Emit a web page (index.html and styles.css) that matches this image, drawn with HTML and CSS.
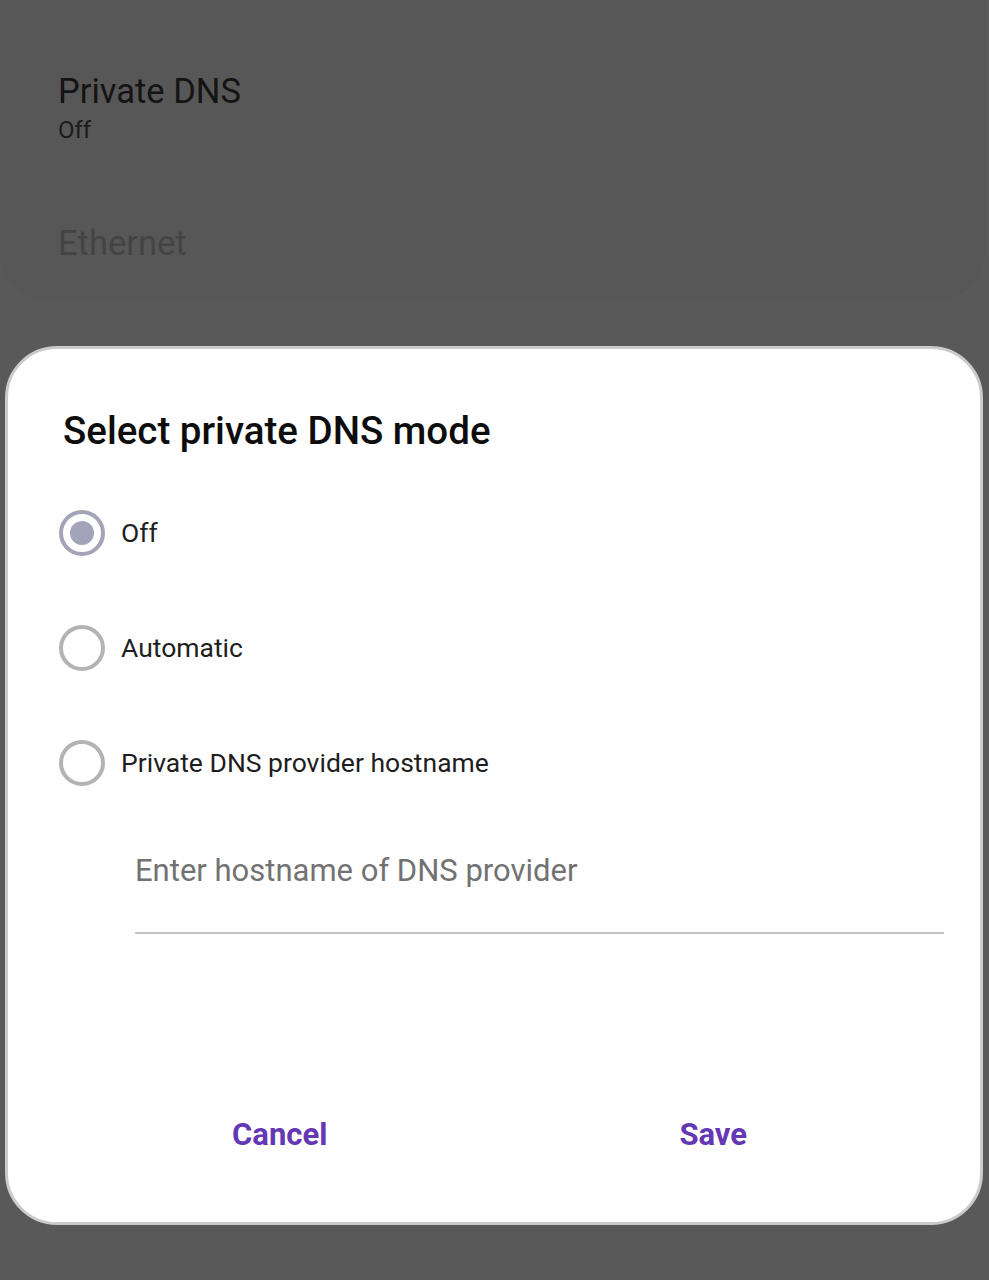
FILE: index.html
```html
<!DOCTYPE html>
<html lang="en">
<head>
    <meta charset="UTF-8">
    <meta name="viewport" content="width=device-width, initial-scale=1.0">
    <title>Select private DNS mode</title>
    <link rel="stylesheet" href="styles.css">
</head>
<body>
    <div class="settings-card">
        <div class="setting">
            <div class="setting-title">Private DNS</div>
            <div class="setting-summary">Off</div>
        </div>
        <div class="setting muted">
            <div class="setting-title">Ethernet</div>
        </div>
    </div>

    <div class="dialog">
        <h2 class="dialog-title">Select private DNS mode</h2>
        <div class="options">
            <label class="option">
                <span class="radio checked"></span>
                <span class="option-label">Off</span>
            </label>
            <label class="option">
                <span class="radio"></span>
                <span class="option-label">Automatic</span>
            </label>
            <label class="option">
                <span class="radio"></span>
                <span class="option-label">Private DNS provider hostname</span>
            </label>
        </div>
        <div class="hostname">
            <input type="text" class="hostname-input" placeholder="Enter hostname of DNS provider">
        </div>
        <div class="actions">
            <button class="btn">Cancel</button>
            <button class="btn">Save</button>
        </div>
    </div>
</body>
</html>
```

FILE: styles.css
```css
body { margin: 0; background: #595959; font-family: Roboto, "Noto Sans", sans-serif; height: 1280px; overflow: hidden; }
.settings-card { background: #575757; border-radius: 0 0 48px 48px; margin-right: 4px; height: 300px; box-sizing: border-box; padding: 70px 58px 0; }
.setting-title { font-size: 34.5px; line-height: 42px; color: #141414; }
.setting-summary { font-size: 24px; line-height: 32px; margin-top: 2px; color: #1c1c1c; }
.setting.muted { margin-top: 76px; }
.setting.muted .setting-title { color: #444; }
.dialog { margin: 46px 6px 0 5px; background: #fff; border: 3px solid #cbcbcb; border-radius: 52px; height: 879px; box-sizing: border-box; display: flex; flex-direction: column; }
.dialog-title { margin: 0; padding: 62px 0 0 55px; font-size: 38.5px; line-height: 40px; font-weight: 500; color: #0d0d0d; }
.options { margin-top: 24px; display: flex; flex-direction: column; }
.option { height: 115px; display: flex; align-items: center; padding-left: 51px; }
.radio { width: 38px; height: 38px; border: 4px solid #b3b3b3; border-radius: 50%; flex: none; position: relative; }
.radio.checked { border-color: #a4a4b8; }
.radio.checked::after { content: ""; position: absolute; left: 7px; top: 7px; width: 24px; height: 24px; border-radius: 50%; background: #a3a3b9; }
.option-label { margin-left: 16px; font-size: 26.5px; color: #1e1e1e; }
.hostname { margin: 0 36px 0 127px; padding-top: 30px; border-bottom: 2px solid #c4c4c4; }
.hostname-input { width: 100%; border: none; outline: none; padding: 0 0 42px; font-family: inherit; font-size: 31px; line-height: 40px; height: 82px; box-sizing: border-box; color: #222; }
.hostname-input::placeholder { color: #727272; }
.actions { margin-top: 181px; padding: 0 50px 0 55px; display: flex; }
.btn { flex: 1; background: none; border: none; font-family: inherit; font-size: 31px; line-height: 40px; font-weight: 700; color: #6637b5; padding: 0; cursor: pointer; }
```
